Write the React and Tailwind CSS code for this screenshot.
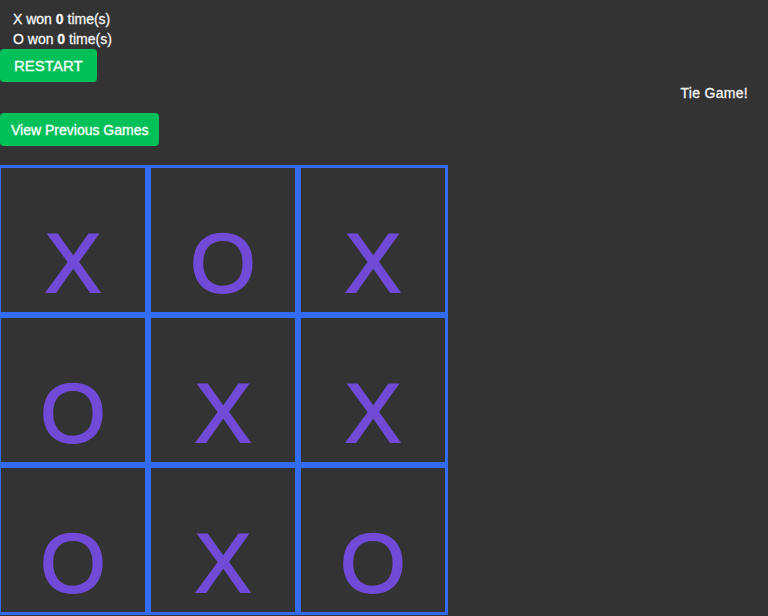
import React from 'react';

const board = ['X', 'O', 'X', 'O', 'X', 'X', 'O', 'X', 'O'];

function Cell({ value }) {
  return (
    <div className="h-[150px] w-[150px] border-[3px] border-[#336cf4] flex justify-center">
      <span className="pt-[53px] text-[84px] leading-[84px] text-[#714ad8] [-webkit-text-stroke:2px_#714ad8]">
        {value}
      </span>
    </div>
  );
}

export default function App() {
  return (
    <div className="min-h-[616px] bg-[#333333] text-[#f4f4f4] text-[14px] font-['Liberation_Sans',Arial,sans-serif] overflow-hidden [-webkit-text-stroke:0.3px_currentColor]">
      <div className="pl-[13px] pt-[9px] leading-5">
        <div>X won <b>0</b> time(s)</div>
        <div>O won <b>0</b> time(s)</div>
      </div>
      <button className="h-[33px] px-[14px] rounded-[4px] bg-[#00c05a] text-white text-[15px] leading-none">
        RESTART
      </button>
      <div className="mt-[1px] pr-[20px] text-right leading-5 tracking-[0.3px]">Tie Game!</div>
      <button className="mt-[10px] h-[33px] px-[11px] rounded-[4px] bg-[#00c05a] text-white text-[14px] leading-none">
        View Previous Games
      </button>
      <div className="mt-[19px] -ml-[2px] grid grid-cols-[repeat(3,150px)] w-[450px]">
        {board.map((v, i) => (
          <Cell key={i} value={v} />
        ))}
      </div>
    </div>
  );
}
